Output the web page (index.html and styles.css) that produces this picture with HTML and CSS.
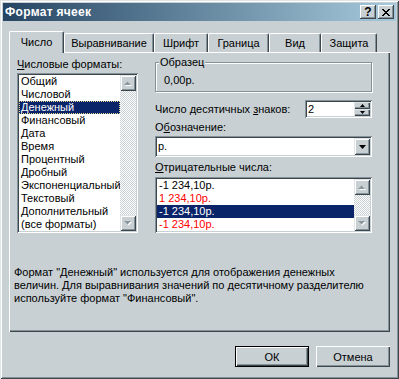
FILE: index.html
```html
<!DOCTYPE html>
<html lang="ru">
<head>
<meta charset="utf-8">
<title>Формат ячеек</title>
<link rel="stylesheet" href="styles.css">
</head>
<body>
<div class="window">
  <div class="titlebar">
    <span class="title">Формат ячеек</span>
    <div class="tbtns">
      <span class="tbtn help">?</span>
      <span class="tbtn close"><svg width="8" height="7" viewBox="0 0 8 7"><path d="M0 0h2v1h1v1h2V1h1V0h2v1H7v1H6v1H5v1h1v1h1v1h1v1H6V6H5V5H3v1H2v1H0V6h1V5h1V4h1V3H2V2H1V1H0z" fill="#000"/></svg></span>
    </div>
  </div>
  <div class="client">
    <div class="tabs">
      <div class="tab sel" style="width:55px">Число</div>
      <div class="tab" style="width:90px">Выравнивание</div>
      <div class="tab" style="width:54px">Шрифт</div>
      <div class="tab" style="width:61px">Граница</div>
      <div class="tab" style="width:52px">Вид</div>
      <div class="tab" style="width:56px">Защита</div>
    </div>
    <div class="panel">
      <div class="cols">
        <div class="left">
          <div class="label"><u>Ч</u>исловые форматы:</div>
          <div class="listbox fmt">
            <div class="items">
              <div class="item">Общий</div>
              <div class="item">Числовой</div>
              <div class="item selected focus">Денежный</div>
              <div class="item">Финансовый</div>
              <div class="item">Дата</div>
              <div class="item">Время</div>
              <div class="item">Процентный</div>
              <div class="item">Дробный</div>
              <div class="item">Экспоненциальный</div>
              <div class="item">Текстовый</div>
              <div class="item">Дополнительный</div>
              <div class="item">(все форматы)</div>
            </div>
            <div class="vscroll">
              <div class="sbtn"><svg width="8" height="5" viewBox="0 0 8 5"><path d="M4.5 1.5l3.5 3.5h-7z" fill="#fff"/><path d="M3.5 0.5L7 4H0z" fill="#8a969e"/></svg></div>
              <div class="track"></div>
              <div class="sbtn"><svg width="8" height="5" viewBox="0 0 8 5"><path d="M1 1h7L4.5 4.5z" fill="#fff"/><path d="M0 0h7L3.5 3.5z" fill="#8a969e"/></svg></div>
            </div>
          </div>
        </div>
        <div class="right">
          <fieldset class="group">
            <legend>Образец</legend>
            <div class="sample">0,00р.</div>
          </fieldset>
          <div class="row">
            <span>Число десятичных <u>з</u>наков:</span>
            <div class="spin">
              <span class="val">2</span>
              <div class="spinbtns">
                <div class="spb"><svg width="5" height="3" viewBox="0 0 5 3"><path d="M2.5 0L5 3H0z" fill="#000"/></svg></div>
                <div class="spb"><svg width="5" height="3" viewBox="0 0 5 3"><path d="M0 0h5L2.5 3z" fill="#000"/></svg></div>
              </div>
            </div>
          </div>
          <div class="label l2">О<u>б</u>означение:</div>
          <div class="combo">
            <span class="val">р.</span>
            <div class="dropbtn"><svg width="7" height="4" viewBox="0 0 7 4"><path d="M0 0h7L3.5 4z" fill="#000"/></svg></div>
          </div>
          <div class="label l3"><u>О</u>трицательные числа:</div>
          <div class="listbox neg">
            <div class="items">
              <div class="item">-1 234,10р.</div>
              <div class="item red">1 234,10р.</div>
              <div class="item selected">-1 234,10р.</div>
              <div class="item red">-1 234,10р.</div>
            </div>
            <div class="vscroll">
              <div class="sbtn"><svg width="8" height="5" viewBox="0 0 8 5"><path d="M4.5 1.5l3.5 3.5h-7z" fill="#fff"/><path d="M3.5 0.5L7 4H0z" fill="#8a969e"/></svg></div>
              <div class="track"></div>
              <div class="sbtn"><svg width="8" height="5" viewBox="0 0 8 5"><path d="M1 1h7L4.5 4.5z" fill="#fff"/><path d="M0 0h7L3.5 3.5z" fill="#8a969e"/></svg></div>
            </div>
          </div>
        </div>
      </div>
      <p class="desc">Формат "Денежный" используется для отображения денежных<br>величин. Для выравнивания значений по десятичному разделителю<br>используйте формат "Финансовый".</p>
    </div>
    <div class="buttons">
      <div class="btn default"><span>ОК</span></div>
      <div class="btn"><span>Отмена</span></div>
    </div>
  </div>
</div>
</body>
</html>
```
FILE: styles.css
```css
* { box-sizing: border-box; }
html, body { margin: 0; padding: 0; }
body {
  font-family: "Liberation Sans", Arial, sans-serif;
  font-size: 11px;
  color: #000;
  background: #c8d0d4;
}
.window {
  width: 399px;
  height: 379px;
  background: #c8d0d4;
  padding: 3px;
  display: flex;
  flex-direction: column;
  box-shadow: inset 1px 1px #dfe4e6, inset -1px -1px #3c464c, inset 2px 2px #fff, inset -2px -2px #84929a;
}
.titlebar {
  height: 18px;
  flex: none;
  display: flex;
  align-items: center;
  justify-content: space-between;
  padding: 0 2px 0 2px;
  background: linear-gradient(to right, #264563, #a6cadc);
}
.title {
  color: #fff;
  font-weight: bold;
  font-size: 12px;
  letter-spacing: 0.3px;
}
.tbtns { display: flex; gap: 2px; }
.tbtn {
  width: 16px;
  height: 14px;
  background: #c8d0d4;
  display: flex;
  align-items: center;
  justify-content: center;
  box-shadow: inset -1px -1px #3c464c, inset 1px 1px #fff, inset -2px -2px #84929a;
  font-weight: bold;
  font-size: 12px;
  line-height: 14px;
}
.tbtn svg { display: block; margin-left: -1px; }
.client {
  flex: 1;
  padding: 10px 6px 0 6px;
  display: flex;
  flex-direction: column;
}
.tabs {
  display: flex;
  align-items: flex-end;
  height: 21px;
  position: relative;
  z-index: 1;
}
.tab {
  height: 19px;
  flex: none;
  text-align: center;
  line-height: 18px;
  border-top: 1px solid #fff;
  border-left: 1px solid #fff;
  border-right: 1px solid #3c464c;
  box-shadow: inset -1px 0 #84929a;
  border-radius: 2px 2px 0 0;
  background: #c8d0d4;
}
.tab.sel {
  height: 22px;
  margin-bottom: -1px;
  line-height: 13px;
  padding-top: 4px;
}
.panel {
  height: 280px;
  flex: none;
  position: relative;
  background: #c8d0d4;
  padding: 6px 8px 0 8px;
  box-shadow: inset 1px 1px #fff, inset -1px -1px #3c464c, inset -2px -2px #84929a;
}
.cols { display: flex; gap: 17px; }
.left { width: 121px; flex: none; }
.right { width: 217px; flex: none; margin-top: -2px; }
.label { height: 13px; line-height: 13px; white-space: nowrap; }
.listbox {
  display: flex;
  background: #fff;
  padding: 2px;
  box-shadow: inset 1px 1px #84929a, inset -1px -1px #fff, inset 2px 2px #3c464c, inset -2px -2px #c8d0d4;
}
.fmt { margin-top: 2px; height: 160px; }
.items { flex: 1; min-width: 0; }
.item {
  height: 13px;
  line-height: 13px;
  padding-left: 2px;
  white-space: nowrap;
  overflow: hidden;
}
.item.selected { background: #0a246a; color: #fff; }
.item.focus { outline: 1px dotted #e8d890; outline-offset: -1px; }
.item.red { color: #f00; }
.vscroll {
  width: 16px;
  flex: none;
  display: flex;
  flex-direction: column;
}
.sbtn {
  height: 16px;
  flex: none;
  background: #c8d0d4;
  display: flex;
  align-items: center;
  justify-content: center;
  box-shadow: inset 1px 1px #dfe4e6, inset -1px -1px #3c464c, inset 2px 2px #fff, inset -2px -2px #84929a;
}
.sbtn svg { display: block; }
.track {
  flex: 1;
  background-color: #e4e8ea;
  background-image: repeating-conic-gradient(#c8d0d4 0 25%, #fff 0 50%);
  background-size: 2px 2px;
}
.group {
  margin: 0;
  padding: 5px 8px 4px 8px;
  border: 1px solid #84929a;
  box-shadow: 1px 1px #fff, inset 1px 1px #fff;
  height: 36px;
  min-width: 0;
}
.group legend {
  padding: 0 1px;
  margin-left: -5px;
  line-height: 13px;
  height: 13px;
  background: #c8d0d4;
}
.sample { line-height: 13px; height: 13px; }
.row {
  margin-top: 8px;
  display: flex;
  align-items: center;
  justify-content: space-between;
  height: 18px;
}
.spin {
  width: 67px;
  height: 18px;
  background: #fff;
  display: flex;
  padding: 2px;
  box-shadow: inset 1px 1px #84929a, inset -1px -1px #fff, inset 2px 2px #3c464c, inset -2px -2px #c8d0d4;
}
.spin .val { flex: 1; line-height: 14px; padding-left: 1px; }
.spinbtns { width: 16px; display: flex; flex-direction: column; }
.spb {
  flex: 1;
  background: #c8d0d4;
  display: flex;
  align-items: center;
  justify-content: center;
  box-shadow: inset 1px 1px #dfe4e6, inset -1px -1px #3c464c, inset -2px -2px #84929a;
}
.spb svg { display: block; }
.l2 { margin-top: 3px; }
.combo {
  margin-top: 2px;
  height: 21px;
  background: #fff;
  display: flex;
  padding: 2px;
  box-shadow: inset 1px 1px #84929a, inset -1px -1px #fff, inset 2px 2px #3c464c, inset -2px -2px #c8d0d4;
}
.combo .val { flex: 1; line-height: 17px; padding-left: 1px; }
.dropbtn {
  width: 16px;
  background: #c8d0d4;
  display: flex;
  align-items: center;
  justify-content: center;
  box-shadow: inset 1px 1px #dfe4e6, inset -1px -1px #3c464c, inset 2px 2px #fff, inset -2px -2px #84929a;
}
.dropbtn svg { display: block; }
.l3 { margin-top: 4px; }
.neg { margin-top: 3px; height: 56px; }
.desc {
  margin: 33px 0 0 -3px;
  line-height: 13px;
  white-space: nowrap;
}
.buttons {
  display: flex;
  justify-content: flex-end;
  gap: 7px;
  margin-top: 14px;
}
.btn {
  width: 74px;
  height: 21px;
  background: #c8d0d4;
  display: flex;
  align-items: center;
  justify-content: center;
  box-shadow: inset 1px 1px #fff, inset -1px -1px #3c464c, inset -2px -2px #84929a;
}
.btn.default {
  border: 1px solid #000;
}
```
